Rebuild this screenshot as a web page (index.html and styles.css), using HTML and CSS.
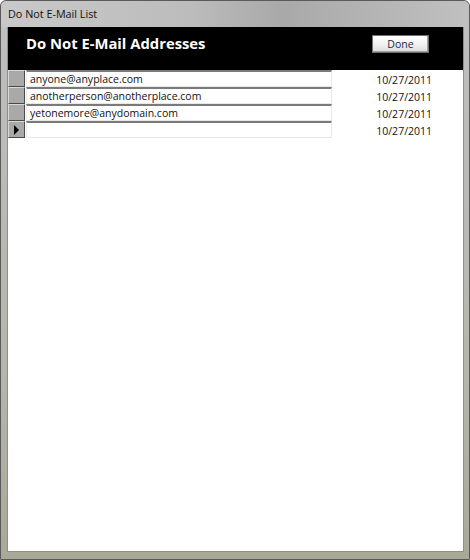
FILE: index.html
```
<!DOCTYPE html>
<html lang="en">
<head>
  <meta charset="UTF-8" />
  <title>Do Not E-Mail List</title>
  <link rel="stylesheet" href="styles.css">
</head>
<body>
  <div class="window">
    <div class="titlebar">Do Not E-Mail List</div>
    <div class="frame">
      <div class="client">
        <div class="header">
          <h1 class="heading">Do Not E-Mail Addresses</h1>
          <button class="done-button">Done</button>
        </div>
        <div class="rows">
          <div class="row">
            <div class="selector"></div>
            <div class="field">anyone@anyplace.com</div>
            <div class="date">10/27/2011</div>
          </div>
          <div class="row">
            <div class="selector"></div>
            <div class="field">anotherperson@anotherplace.com</div>
            <div class="date">10/27/2011</div>
          </div>
          <div class="row">
            <div class="selector"></div>
            <div class="field">yetonemore@anydomain.com</div>
            <div class="date">10/27/2011</div>
          </div>
          <div class="row">
            <div class="selector current"></div>
            <div class="field"></div>
            <div class="date">10/27/2011</div>
          </div>
        </div>
      </div>
    </div>
  </div>
</body>
</html>
```

FILE: styles.css
```
* {
  margin: 0;
  padding: 0;
  box-sizing: border-box;
}
html, body {
  width: 100%;
  height: 100%;
  background: #ffffff;
  overflow: hidden;
}

.window {
  width: 470px;
  height: 560px;
  display: flex;
  flex-direction: column;
  background: linear-gradient(to bottom, #c4c4c4 0%, #bdbdbd 10%, #b4b5ab 70%, #a8a996 100%);
  border: 1px solid #5a5a5a;
  border-radius: 6px 6px 0 0;
  font-family: "Open Sans", "Noto Sans", sans-serif;
}

.titlebar {
  height: 26px;
  padding: 5px 0 0 7px;
  font-size: 10.8px;
  color: #111111;
  background: linear-gradient(to right, #c9c9c9 0%, #bcbcbc 40%, #a9a9a9 60%, #c0c0c0 100%);
  border-radius: 6px 6px 0 0;
}

.frame {
  flex: 1;
  padding: 0 5px 7px 6px;
  display: flex;
}

.client {
  flex: 1;
  background: #ffffff;
  border: 1px solid #8e8f86;
  border-top: none;
}

.header {
  height: 43px;
  background: #000000;
  display: flex;
  align-items: flex-start;
  justify-content: space-between;
  padding: 6px 34px 0 18px;
}

.heading {
  font-size: 14.8px;
  font-weight: bold;
  color: #ffffff;
  line-height: 20px;
}

.done-button {
  width: 57px;
  height: 18px;
  margin-top: 2px;
  font-family: "Open Sans", "Noto Sans", sans-serif;
  font-size: 10.5px;
  color: #1a2a4a;
  background: linear-gradient(to bottom, #ffffff 0%, #f2f2f2 50%, #dcdcdc 100%);
  border: 1px solid #707070;
  box-shadow: inset -1px -1px 0 #a0a0a0;
}

.rows {
  display: flex;
  flex-direction: column;
}

.row {
  display: flex;
  height: 17px;
  align-items: stretch;
}

.selector {
  width: 17px;
  background: #a9a9a9;
  border: 1px solid #4a4a4a;
  border-top-color: #d8d8d8;
  border-left-color: #d8d8d8;
  position: relative;
}

.selector.current::after {
  content: '';
  position: absolute;
  left: 5px;
  top: 3px;
  border-top: 5px solid transparent;
  border-bottom: 5px solid transparent;
  border-left: 5px solid #000000;
}

.field {
  width: 306px;
  margin-left: 1px;
  padding: 0 0 0 3px;
  font-size: 10.5px;
  line-height: 14px;
  color: #111111;
  border: 1px solid #e8e8e8;
  border-top: 2px solid #7a7a7a;
  white-space: nowrap;
}

.date {
  width: 100px;
  padding-top: 2px;
  text-align: right;
  font-size: 10.5px;
  line-height: 17px;
  color: #111111;
}
```
